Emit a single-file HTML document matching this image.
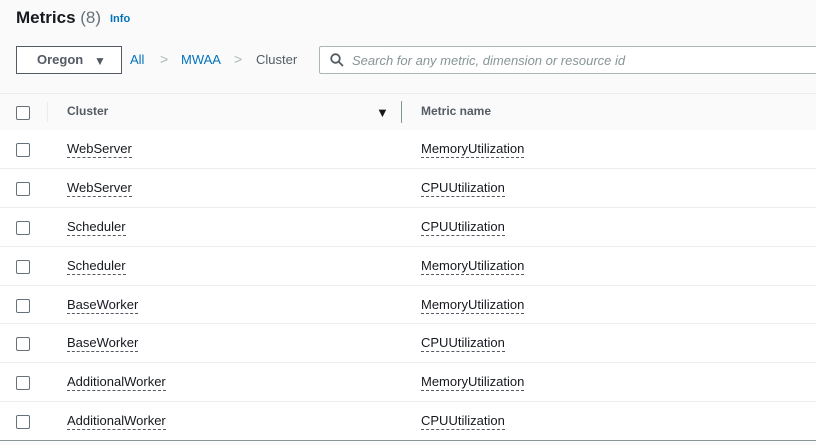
<!DOCTYPE html><html><head><style>
body{margin:0;width:816px;height:445px;overflow:hidden;background:#fafafa;font-family:"Liberation Sans",sans-serif;position:relative;color:#16191f}
.a{position:absolute}
.cb{position:absolute;left:16px;width:12px;height:12px;border:1px solid #687078;border-radius:2px;background:#fff}
.row{position:absolute;left:0;width:816px;height:39px;box-sizing:border-box;background:#fff;border-bottom:1px solid #eaeded}
.t{position:absolute;font-size:13px;top:11px;border-bottom:1px dashed #545b64;line-height:16px}
</style></head><body>
<div class="a" style="left:16px;top:8px;font-size:17px;font-weight:bold">Metrics <span style="font-weight:normal;color:#687078">(8)</span></div>
<div class="a" style="left:110px;top:13px;font-size:11px;font-weight:bold;color:#0073bb">Info</div>
<div class="a" style="left:16px;top:46px;width:104px;height:26px;border:1px solid #545b64;background:#fff;font-size:13px;font-weight:bold;color:#545b64;line-height:26px"><span style="margin-left:20px">Oregon</span><span style="position:absolute;left:77px;top:1px;font-size:12px">▼</span></div>
<div class="a" style="left:130px;top:52px;font-size:13px;color:#0073bb">All</div>
<div class="a" style="left:160px;top:51px;font-size:14px;color:#aab7b8">&gt;</div>
<div class="a" style="left:181px;top:52px;font-size:13px;color:#0073bb">MWAA</div>
<div class="a" style="left:234px;top:51px;font-size:14px;color:#aab7b8">&gt;</div>
<div class="a" style="left:256px;top:52px;font-size:13px;color:#545b64">Cluster</div>
<div class="a" style="left:319px;top:46px;width:500px;height:26px;border:1px solid #aab7b8;border-radius:2px;background:#fff">
<svg class="a" style="left:10px;top:6px" width="14" height="14" viewBox="0 0 14 14"><circle cx="5.5" cy="5.5" r="4.3" fill="none" stroke="#545b64" stroke-width="1.8"/><path d="M8.7 8.7L13 13" stroke="#545b64" stroke-width="1.8"/></svg>
<div class="a" style="left:32px;top:6px;font-size:13px;font-style:italic;color:#879596">Search for any metric, dimension or resource id</div></div>
<div class="a" style="left:0;top:93px;width:816px;height:36px;border-top:1px solid #eaeded;border-bottom:1px solid #eaeded;background:#fafafa">
<div class="cb" style="top:12px"></div>
<div class="a" style="left:47px;top:8px;width:1px;height:20px;background:#eaeded"></div>
<div class="a" style="left:67px;top:10px;font-size:12px;font-weight:bold;color:#545b64">Cluster</div>
<div class="a" style="left:376px;top:11px;font-size:13px;color:#16191f">▼</div>
<div class="a" style="left:401px;top:7px;width:1px;height:22px;background:#879596"></div>
<div class="a" style="left:421px;top:10px;font-size:12px;font-weight:bold;color:#545b64">Metric name</div>
</div>
<div class="row" style="top:130px"><div class="cb" style="top:13px"></div><span class="t" style="left:67px">WebServer</span><span class="t" style="left:421px">MemoryUtilization</span></div>
<div class="row" style="top:169px"><div class="cb" style="top:13px"></div><span class="t" style="left:67px">WebServer</span><span class="t" style="left:421px">CPUUtilization</span></div>
<div class="row" style="top:208px"><div class="cb" style="top:13px"></div><span class="t" style="left:67px">Scheduler</span><span class="t" style="left:421px">CPUUtilization</span></div>
<div class="row" style="top:247px"><div class="cb" style="top:13px"></div><span class="t" style="left:67px">Scheduler</span><span class="t" style="left:421px">MemoryUtilization</span></div>
<div class="row" style="top:286px;height:38px"><div class="cb" style="top:13px"></div><span class="t" style="left:67px">BaseWorker</span><span class="t" style="left:421px">MemoryUtilization</span></div>
<div class="row" style="top:324px"><div class="cb" style="top:13px"></div><span class="t" style="left:67px">BaseWorker</span><span class="t" style="left:421px">CPUUtilization</span></div>
<div class="row" style="top:363px"><div class="cb" style="top:13px"></div><span class="t" style="left:67px">AdditionalWorker</span><span class="t" style="left:421px">MemoryUtilization</span></div>
<div class="row" style="top:402px;border-bottom:1px solid #879596"><div class="cb" style="top:13px"></div><span class="t" style="left:67px">AdditionalWorker</span><span class="t" style="left:421px">CPUUtilization</span></div>
</body></html>
